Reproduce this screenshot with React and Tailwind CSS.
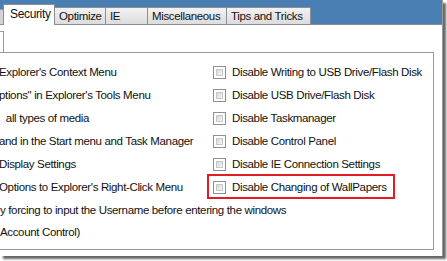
import React from 'react';

const tabs = [
  { title: 'Optimize', w: 'w-[51px]' },
  { title: 'IE', w: 'w-[42px]' },
  { title: 'Miscellaneous', w: 'w-[79px]' },
  { title: 'Tips and Tricks', w: 'w-[84px]' },
];

const rows = [
  { left: "Explorer's Context Menu", right: 'Disable Writing to USB Drive/Flash Disk' },
  { left: 'ptions" in Explorer\'s Tools Menu', right: 'Disable USB Drive/Flash Disk' },
  { left: '\u00a0all types of media', right: 'Disable Taskmanager', pad: 'pl-[4px]' },
  { left: 'and in the Start menu and Task Manager', right: 'Disable Control Panel' },
  { left: 'Display Settings', right: 'Disable IE Connection Settings' },
  { left: "Options to Explorer's Right-Click Menu", right: 'Disable Changing of WallPapers' },
];

function Checkbox() {
  return (
    <div className="w-[13px] h-[13px] border border-[#8e8f8f] bg-white p-[2px] shrink-0">
      <div className="w-full h-full bg-gradient-to-br from-[#d6d6d6] to-[#f6f6f6] border border-[#c8c8c8]" />
    </div>
  );
}

export default function App() {
  return (
    <div
      className="w-[447px] h-[261px] bg-white overflow-hidden text-[11.5px] text-[#111] tracking-[-0.35px]"
      style={{ fontFamily: '"Liberation Sans", Arial, sans-serif' }}
    >
      <div className="relative w-[443px] h-[256px] bg-white border-r border-[#9a9a9a] shadow-[3px_3px_2px_rgba(0,0,0,0.6)]">
        {/* tab strip */}
        <div className="h-[25px] bg-[#4a7fb4] border-b border-[#8a8d94] flex items-end">
          <div className="w-[3px] h-[15px] bg-[#d4d4d4] border-t border-[#9a9a9a]" />
          <div className="w-[52px] h-[21px] -mb-px bg-white border border-b-0 border-[#8c8e94] pl-[6px] pt-[2px] text-[12px] leading-[14px] relative z-10">
            Security
          </div>
          {tabs.map((t) => (
            <div
              key={t.title}
              className={`${t.w} h-[17px] border border-l-0 border-b-0 border-[#8c8e94] bg-gradient-to-b from-[#f2f2f2] to-[#dcdcdc] pl-[4px] pt-[1px] leading-[14px] whitespace-nowrap`}
            >
              {t.title}
            </div>
          ))}
        </div>

        {/* little corner of the upper box */}
        <div className="w-[4px] h-[21px] mt-[6px] border-t border-r border-[#9a9aa4]" />

        {/* group box */}
        <div className="w-[434px] h-[198px] border-t border-r border-b border-[#9a9aa4] pt-[8px]">
          {rows.map((r) => (
            <div key={r.right} className="h-[23px] flex items-center whitespace-nowrap">
              <div className={`w-[214px] ${r.pad || ''} -ml-[1px]`}>{r.left}</div>
              <Checkbox />
              <div className="ml-[6px]">{r.right}</div>
            </div>
          ))}
          <div className="h-[23px] flex items-center whitespace-nowrap">
            y forcing to input the Username before entering the windows
          </div>
          <div className="h-[21px] flex items-center whitespace-nowrap">Account Control)</div>
        </div>

        {/* annotation */}
        <div className="absolute left-[207px] top-[174px] w-[188px] h-[25px] border-2 border-[#e31b23]" />
      </div>
    </div>
  );
}
